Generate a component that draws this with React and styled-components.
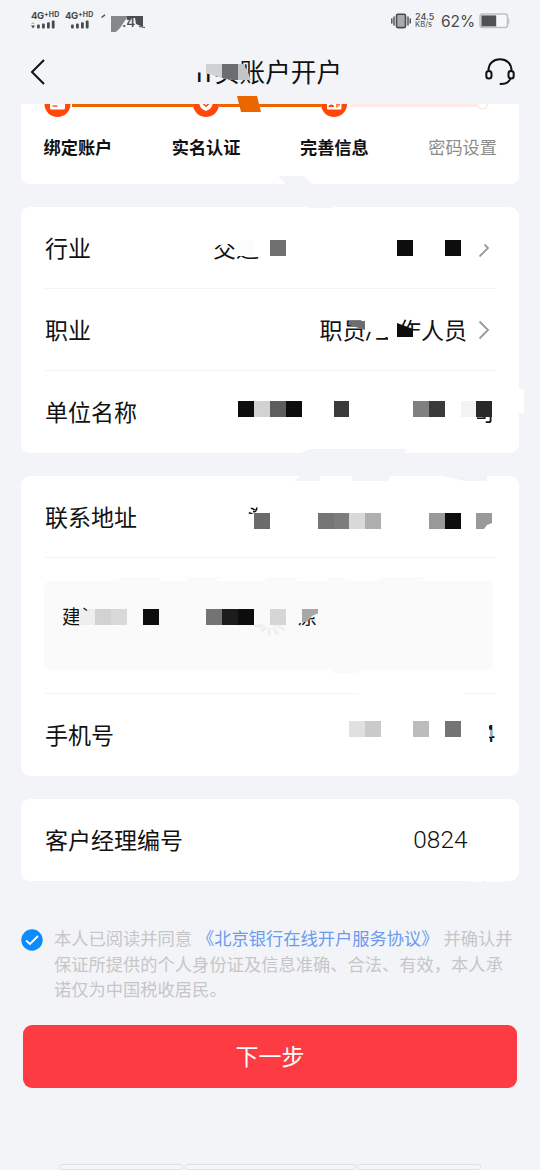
import React from 'react'
import styled, {createGlobalStyle} from 'styled-components'

const BG = '#f2f4f8'

const GlobalStyle = createGlobalStyle`
  * {
    box-sizing: border-box;
  }

  body {
    margin: 0;
    background: #f2f4f8;
    font-family: Roboto, 'Noto Sans CJK SC', sans-serif;
    color: #111;
  }
`

// mosaic cells are 16px squares: [x, y, colour, width]
const Mosaic = ({cells}) =>
  cells.map(([x, y, fill, w = 16]) => (
    <rect key={x} x={x} y={y} width={w} height="16" fill={fill} shapeRendering="crispEdges"/>
  ))

const Cover = ({points, fill = '#fff'}) => <polygon points={points} fill={fill}/>

const Signal = ({roaming}) => (
  <SignalBox>
    <SignalText>4G<sup>+HD</sup></SignalText>
    <svg width="26" height="9" viewBox="0 0 26 9" fill="#4a4b4e">
      {roaming && <path d="M0 4l2-2 2 2z" fill="#bbb"/>}
      {roaming && <path d="M0 5.5l2 3L4 5.5z"/>}
      <rect x="6" y="4.5" width="2.8" height="4" rx="1"/>
      <rect x="11" y="3.5" width="2.8" height="5" rx="1"/>
      <rect x="16" y="2.2" width="2.8" height="6.3" rx="1"/>
      <rect x="20.8" y="0.5" width="2.8" height="8" rx="1"/>
    </svg>
  </SignalBox>
)

const Chevron = () => (
  <svg width="12" height="20" viewBox="0 0 12 20" fill="none" stroke="#999" strokeWidth="1.8">
    <path d="M1.5 1.5L10 10L1.5 18.5"/>
  </svg>
)

const StatusBar = () => (
  <Status>
    <Signal roaming/>
    <Signal/>
    <Clock>
      <span>.4</span>
      <Overlay viewBox="98 12 50 22">
        <path d="M101.5 17.5L105 14.8" stroke="#555" strokeWidth="1.5"/>
        <Cover points="111,16 127,16 127,18 124,22 120,28 116,32 111,32" fill="#868789"/>
        <Cover points="127,16 143,16 143,27 136,24 135,18 132,18 129,20 127,20" fill="#4c4d50"/>
        <Cover points="116,32 122,27.5 127,27.5 143,28 143,34" fill={BG}/>
        <path d="M139 26.5L145 27.5" stroke="#4c4d50"/>
      </Overlay>
    </Clock>
    <StatusRight>
      <svg width="20" height="16" viewBox="0 0 20 16">
        <rect x="5.5" y="1.2" width="9" height="13.4" rx="1.5" fill="#aaa" stroke="#4a4b4e" strokeWidth="1.6"/>
        <path d="M3 4v8M17 4v8M.8 6v4M19.2 6v4" stroke="#4a4b4e" strokeWidth="1.4" strokeLinecap="round"/>
      </svg>
      <Speed><b>24.5</b><span>KB/s</span></Speed>
      <Percent>62%</Percent>
      <svg width="31" height="16" viewBox="0 0 31 16">
        <rect x="1" y="1" width="27.5" height="13.6" rx="2.5" fill="#f6f7fa" stroke="#bfc0c2" strokeWidth="1.5"/>
        <rect x="2.4" y="2.4" width="14.8" height="11" fill="#505153"/>
        <path d="M29.7 5.5v5" stroke="#bfc0c2" strokeWidth="1.2"/>
      </svg>
    </StatusRight>
  </Status>
)

const Header = () => (
  <TopBar>
    <svg width="16" height="28" viewBox="0 0 16 28" fill="none" stroke="#111" strokeWidth="2">
      <path d="M14 2L2 14L14 26"/>
    </svg>
    <Title>
      <i>II</i>实账户开户
      <Overlay viewBox="198 54 144 38">
        <Cover points="194,54 238,54 238,80 232,80 222,78 206,73 194,72" fill={BG}/>
        <Cover points="206,64 222,64 222,78 206,73" fill="#d0d1d3"/>
        <Cover points="222,64 238,64 238,80 232,80 222,78" fill="#6c6d6f"/>
        <Cover points="238,64 243,64 247,70 251,80 238,80" fill="#c3c4c6"/>
      </Overlay>
    </Title>
    <svg width="32" height="30" viewBox="0 0 32 30" fill="none" stroke="#111" strokeWidth="2" strokeLinecap="round">
      <path d="M4.5 13.5C4.5 6.5 9.5 2.2 16 2.2S27.5 6.5 27.5 13.5"/>
      <rect x="2.3" y="14" width="5.2" height="7.5" rx="2.5"/>
      <rect x="24.5" y="14" width="5.2" height="7.5" rx="2.5"/>
      <path d="M26.5 21.5C25 25.5 21 27 16.5 27"/>
    </svg>
  </TopBar>
)

const StepTrack = () => (
  <Track width="498" height="14" viewBox="21 104 498 14">
    <rect x="72" y="104" width="121" height="3" fill="#ec6600"/>
    <rect x="219" y="104" width="102" height="3" fill="#ec6600"/>
    <rect x="350" y="104" width="128" height="3" fill="#ffe9e4"/>
    <g fill="#ff480a">
      <circle cx="57.5" cy="104" r="13"/>
      <circle cx="206" cy="104" r="13"/>
      <circle cx="334" cy="104" r="13"/>
    </g>
    <rect x="50" y="98" width="15" height="11.5" rx="1.5" fill="#fff"/>
    <path d="M52.5 106h5" stroke="#ff480a" strokeWidth="1.3"/>
    <path d="M199.5 98h13v6.5q-1 4.5-6.5 6.5q-5.5-2-6.5-6.5z" fill="#fff"/>
    <path d="M203 103.5l3 2.8l3-2.8" fill="none" stroke="#ff480a" strokeWidth="1.5"/>
    <rect x="327" y="98" width="14.5" height="11.5" rx="1" fill="#fff"/>
    <path d="M328.5 107q0-2.5 2.8-2.5t2.8 2.5zM336 104.2h4v1.2h-4zM336 106.3h2.5v1h-2.5z" fill="#ff480a"/>
    <circle cx="482.5" cy="104" r="5" fill="#fff" stroke="#ffe9e4" strokeWidth="1.5"/>
  </Track>
)

const App = () => {
  return (
    <Page>
      <GlobalStyle/>
      <StatusBar/>
      <Header/>

      <Steps>
        <StepTrack/>
        <StepLabels>
          <Step $done>绑定账户</Step>
          <Step $done>实名认证</Step>
          <Step $done>完善信息</Step>
          <Step>密码设置</Step>
        </StepLabels>
        <Overlay viewBox="21 104 498 80">
          <Cover points="237,96 257,96 261,112 241,112" fill="#ec6600"/>
          <Cover points="278,176 304,176 312,184 286,184" fill={BG}/>
        </Overlay>
      </Steps>

      <Card>
        <Row>
          <Label>行业</Label>
          <Value $end="219px">交通</Value>
          <Chevron/>
          <Overlay viewBox="21 207 498 82">
            <Cover points="205,230 262,230 262,256 236,256 236,244 224,244 220,245 205,245"/>
            <Mosaic cells={[[238, 240, '#fcfcfc'], [270, 240, '#707070'], [397, 240, '#0d0d0d'], [445, 240, '#0d0d0d']]}/>
            <Cover points="476,236 492,236 492,243 485,244 483,246 486,248 479,254 476,250"/>
            <Cover points="195,287 264,287 264,290 195,290"/>
            <Cover points="280,287 354,287 354,290 280,290"/>
            <Cover points="398,287 417,287 417,290 398,290"/>
            <Cover points="308,206 333,206 333,208 308,208" fill={BG}/>
          </Overlay>
        </Row>
        <Row>
          <Label>职业</Label>
          <Value $end="11px">职员/工作人员</Value>
          <Chevron/>
          <Overlay viewBox="21 289 498 82">
            <Cover points="365,317 398,317 398,337 374,337 374,342 371,342 371,332 365,331"/>
            <Cover points="388,317 402,317 402,322 397,324 397,342 388,342"/>
            <Cover points="397,337 413,337 413,331 422,331 422,342 397,342"/>
            <Cover points="349,321 365,321 365,330 349,325" fill="#6e6e6e"/>
            <Cover points="397,323 413,329 413,337 397,337" fill="#0d0d0d"/>
            <Cover points="440,369 461,369 461,372 440,372"/>
          </Overlay>
        </Row>
        <Row $last>
          <Label>单位名称</Label>
          <Value $end="2px">司</Value>
          <Overlay viewBox="21 371 498 82">
            <Cover points="470,395 497,395 497,416 477,416 477,424 470,424"/>
            <Mosaic cells={[
              [238, 401, '#0d0d0d'], [254, 401, '#d2d2d2'], [270, 401, '#5d5d5d'], [286, 401, '#0d0d0d'],
              [334, 401, '#3b3b3b', 15], [413, 401, '#808080'], [429, 401, '#3a3a3a'],
              [461, 401, '#f3f3f3', 15], [476, 401, '#282828'],
            ]}/>
            <Cover points="518,389 524,389 524,413 518,413"/>
            <Cover points="298,454 310,449 407,449 404,454" fill={BG}/>
          </Overlay>
        </Row>
      </Card>

      <Card>
        <Row>
          <Label>联系地址</Label>
          <Value $end="227px">头</Value>
          <Overlay viewBox="21 476 498 82">
            <Cover points="244,514 254,514 254,510 258,510 258,503 272,503 272,532 244,532"/>
            <Mosaic cells={[
              [254, 513, '#6b6b6b'], [318, 513, '#757575'], [334, 513, '#7c7c7c', 15], [349, 513, '#d9d9d9'],
              [365, 513, '#afafaf'], [429, 513, '#999'], [445, 513, '#0d0d0d'],
            ]}/>
            <Cover points="476,513 492,513 492,523 487,525 484,529 476,529" fill="#98999b"/>
            <path d="M253 511.5q3.5 1 3.8-4" fill="none" stroke="#111" strokeWidth="1.5"/>
            <Cover points="294,481 300,476 320,476 320,481" fill={BG}/>
            <Cover points="351,481 353,476 391,476 387,481" fill={BG}/>
            <Cover points="443,476 487,476 487,481 465,481" fill="#eff4f8"/>
            <Cover points="147,556 157,556 157,559 147,559"/>
            <Cover points="202,556 245,556 245,559 202,559"/>
            <Cover points="277,556 370,556 370,559 277,559"/>
            <Cover points="424,556 459,556 459,559 424,559"/>
          </Overlay>
        </Row>
        <AddressWrap>
          <Address>
            <span>建设</span>
            <span>原</span>
          </Address>
          <Overlay viewBox="21 558 498 136">
            <Cover points="81,605 104,605 104,630 81,630" fill="#fafafa"/>
            <Cover points="296,605 320,605 320,615 308,619 302,623 296,623" fill="#fafafa"/>
            <Mosaic cells={[
              [79, 609, '#eee'], [95, 609, '#d2d2d2'], [111, 609, '#d9d9d9'], [143, 609, '#0d0d0d'],
              [206, 609, '#737373'], [222, 609, '#1c1c1c'], [238, 609, '#0d0d0d'], [270, 609, '#d6d6d6'],
            ]}/>
            <path d="M83.5 608l3.5 2.5" stroke="#222" strokeWidth="1.5"/>
            <Cover points="302,609 318,609 318,613.5 312,616 307,622 302,622" fill="#a8a8a8"/>
            <path d="M265 628l-3 3M269.5 629v5.5M274 628.5l3 5M277.5 626l6 3M262 625.8l-6 .4" stroke="#efefef" strokeWidth="3" strokeLinecap="round"/>
            <Cover points="116,582 122,577 161,577 160,582" fill="#fafafa"/>
            <Cover points="184,582 190,577 220,577 214,582" fill="#fafafa"/>
            <Cover points="263,582 267,577 299,577 293,582" fill="#fafafa"/>
            <Cover points="328,582 327,577 344,577 346,582" fill="#fafafa"/>
            <Cover points="374,582 384,577 426,577 420,582" fill="#fafafa"/>
            <Cover points="332,670 358,670 358,673 332,673" fill="#fafafa"/>
            <Cover points="358,692 464,692 464,695 358,695"/>
          </Overlay>
        </AddressWrap>
        <Row $last>
          <Label>手机号</Label>
          <Value $end="1px">4</Value>
          <Overlay viewBox="21 694 498 82">
            <Cover points="476,720 489,720 489,750 476,750"/>
            <rect x="489" y="730" width="3" height="7" fill="#fff" opacity="0.6"/>
            <Mosaic cells={[[349, 721, '#e0e0e0'], [365, 721, '#cacaca'], [413, 721, '#bcbcbc'], [445, 721, '#747474']]}/>
          </Overlay>
        </Row>
      </Card>

      <Card>
        <Row $last>
          <Label>客户经理编号</Label>
          <Value $end="15px" $number>08245</Value>
          <Overlay viewBox="21 799 498 82">
            <Cover points="469.5,825 486,825 486,855 469.5,855"/>
            <Cover points="470,880 481,880 481,882 470,882"/>
            <Cover points="486,880 505,880 505,882 486,882"/>
          </Overlay>
        </Row>
      </Card>

      <Agreement>
        <svg width="22" height="22" viewBox="0 0 22 22">
          <circle cx="11" cy="11" r="10.7" fill="#0a8cff"/>
          <path d="M5 11.5L9 15L17 7" fill="none" stroke="#fff" strokeWidth="1.8"/>
        </svg>
        <p>
          本人已阅读并同意 <a>《北京银行在线开户服务协议》</a> 并确认并<br/>
          保证所提供的个人身份证及信息准确、合法、有效，本人承<br/>
          诺仅为中国税收居民。
        </p>
      </Agreement>

      <NextButton>下一步</NextButton>

      <BottomTabs>
        <i/>
        <i/>
        <i/>
      </BottomTabs>
    </Page>
  )
}

const Page = styled.main`
  width: 540px;
  height: 1170px;
  overflow: hidden;
  display: flex;
  flex-direction: column;
  background: #f2f4f8;
`

const Overlay = styled.svg`
  position: absolute;
  inset: 0;
  width: 100%;
  height: 100%;
  overflow: visible;
  pointer-events: none;
`

const Status = styled.div`
  height: 42px;
  padding: 12px 30px 0 31px;
  display: flex;
  align-items: flex-start;
  gap: 4px;
  color: #4a4b4e;
  font-family: Inter, sans-serif;
`

const SignalBox = styled.div`
  width: 30px;
  display: flex;
  flex-direction: column;
`

const SignalText = styled.span`
  font-size: 9.5px;
  font-weight: 700;
  line-height: 8px;
  letter-spacing: -0.3px;
  white-space: nowrap;

  sup {
    font-size: 7px;
    line-height: 0;
    vertical-align: 2px;
    letter-spacing: 0.1px;
  }
`

const Clock = styled.div`
  position: relative;
  width: 50px;
  height: 22px;
  margin-left: -1px;
  padding: 1px 0 0 24px;
  font-size: 14px;
  font-weight: 500;
  line-height: 18px;
`

const StatusRight = styled.div`
  margin-left: auto;
  display: flex;
  align-items: center;
  height: 18px;
`

const Speed = styled.div`
  width: 20px;
  margin-left: 4px;
  display: flex;
  flex-direction: column;
  font-size: 9px;
  line-height: 8.5px;

  b {
    font-weight: 500;
  }

  span {
    font-size: 7.7px;
  }
`

const Percent = styled.span`
  width: 33px;
  margin: 0 5px 0 6px;
  font-size: 15.5px;
  font-weight: 400;
  white-space: nowrap;
`

const TopBar = styled.header`
  height: 62px;
  padding: 0 24px 2px 30px;
  display: flex;
  align-items: center;
  justify-content: space-between;
`

const Title = styled.h1`
  position: relative;
  width: 144px;
  margin: 2px 0 0 10px;
  font-size: 25.6px;
  font-weight: 400;
  line-height: 38px;
  display: flex;
  justify-content: flex-end;
  white-space: nowrap;

  i {
    font-style: normal;
    letter-spacing: 2.2px;
  }
`

const Steps = styled.section`
  position: relative;
  flex: none;
  height: 80px;
  margin: 0 21px 23px;
  background: #fff;
  border-radius: 0 0 8px 8px;
`

const Track = styled.svg`
  display: block;
`

const StepLabels = styled.div`
  display: flex;
  justify-content: space-between;
  padding: 18px 22px 0 22.5px;
`

const Step = styled.span`
  font-size: 17.2px;
  line-height: 24px;
  font-weight: ${({$done}) => ($done ? 700 : 400)};
  color: ${({$done}) => ($done ? '#111' : '#8c8c8c')};
`

const Card = styled.section`
  flex: none;
  margin: 0 21px 23px;
  background: #fff;
  border-radius: 9px;
`

const Row = styled.div`
  position: relative;
  height: 82px;
  margin: 0;
  padding: 0 23px 0 24px;
  display: flex;
  align-items: center;
  font-size: 23px;

  > svg:not(${Overlay}) {
    margin-right: 6px;
  }

  &::after {
    content: '';
    position: absolute;
    display: ${({$last}) => ($last ? 'none' : 'block')};
    left: 23px;
    right: 23px;
    bottom: 0;
    height: 1px;
    background: #f3f4f5;
  }
`

const Label = styled.span`
  padding-bottom: 2px;
  white-space: nowrap;
`

const Value = styled.span`
  margin-left: auto;
  margin-right: ${({$end}) => $end};
  padding-bottom: 2px;
  white-space: nowrap;
  font-size: ${({$number}) => ($number ? '24.4px' : 'inherit')};
  font-weight: ${({$number}) => ($number ? 300 : 400)};
`

const AddressWrap = styled.div`
  position: relative;
  height: 136px;
  padding: 23px 26px 23px 23px;

  &::after {
    content: '';
    display: block;
    height: 1px;
    margin: 23px -3px 0 0;
    background: #f3f4f5;
  }
`

const Address = styled.div`
  height: 89px;
  padding: 23px 176px 0 18px;
  display: flex;
  justify-content: space-between;
  background: #fafafa;
  border-radius: 6px;
  font-size: 19px;
  line-height: 28px;
`

const Agreement = styled.div`
  display: flex;
  gap: 11px;
  margin: 23px 0 0 21px;

  svg {
    flex: none;
    margin-top: 2px;
  }

  p {
    margin: 0;
    font-size: 17.27px;
    line-height: 25.6px;
    word-spacing: 0.5px;
    color: #c6c6c8;
    white-space: nowrap;
  }

  a {
    color: #6c9aec;
  }
`

const NextButton = styled.button`
  flex: none;
  height: 63px;
  margin: 21px 23px 0;
  padding: 0 0 3px;
  border: 0;
  border-radius: 9px;
  background: #fc3b43;
  color: #fff;
  font-family: inherit;
  font-size: 23px;
`

const BottomTabs = styled.div`
  flex: none;
  display: grid;
  grid-template-columns: 124px 171px 124px;
  gap: 1.5px;
  margin: auto 0 0 59px;

  i {
    height: 6px;
    border: 1px solid #dfe1e5;
    border-radius: 3px;
    background: #f5f6f9;
  }
`

export default App
